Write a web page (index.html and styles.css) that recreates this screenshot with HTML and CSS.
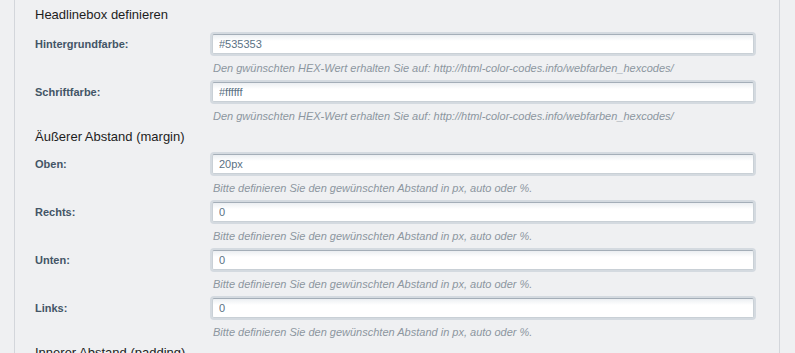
FILE: index.html
```html
<!DOCTYPE html>
<html lang="de">
<head>
  <meta charset="UTF-8" />
  <meta name="viewport" content="width=device-width, initial-scale=1.0"/>
  <title>Headlinebox</title>
  <link rel="stylesheet" href="styles.css">
</head>
<body>

<div class="panel">
  <h3 class="section-title first">Headlinebox definieren</h3>

  <div class="field">
    <label>Hintergrundfarbe:</label>
    <div class="control">
      <input type="text" value="#535353">
      <p class="help">Den gwünschten HEX-Wert erhalten Sie auf: http://html-color-codes.info/webfarben_hexcodes/</p>
    </div>
  </div>

  <div class="field">
    <label>Schriftfarbe:</label>
    <div class="control">
      <input type="text" value="#ffffff">
      <p class="help">Den gwünschten HEX-Wert erhalten Sie auf: http://html-color-codes.info/webfarben_hexcodes/</p>
    </div>
  </div>

  <h3 class="section-title">Äußerer Abstand (margin)</h3>

  <div class="field">
    <label>Oben:</label>
    <div class="control">
      <input type="text" value="20px">
      <p class="help">Bitte definieren Sie den gewünschten Abstand in px, auto oder %.</p>
    </div>
  </div>

  <div class="field">
    <label>Rechts:</label>
    <div class="control">
      <input type="text" value="0">
      <p class="help">Bitte definieren Sie den gewünschten Abstand in px, auto oder %.</p>
    </div>
  </div>

  <div class="field">
    <label>Unten:</label>
    <div class="control">
      <input type="text" value="0">
      <p class="help">Bitte definieren Sie den gewünschten Abstand in px, auto oder %.</p>
    </div>
  </div>

  <div class="field">
    <label>Links:</label>
    <div class="control">
      <input type="text" value="0">
      <p class="help">Bitte definieren Sie den gewünschten Abstand in px, auto oder %.</p>
    </div>
  </div>

  <h3 class="section-title">Innerer Abstand (padding)</h3>
</div>

</body>
</html>
```

FILE: styles.css
```css
body {
  margin: 0;
  background: #eff0f2;
  font-family: 'Liberation Sans', Arial, sans-serif;
  overflow: hidden;
}

.panel {
  margin: 0 15px 0 14px;
  padding: 0 23px 0 20px;
  border-left: 1px solid #d3d6db;
  border-right: 1px solid #d3d6db;
  min-height: 353px;
}

.section-title {
  margin: 0 0 6px;
  font-size: 13px;
  font-weight: normal;
  line-height: 18px;
  color: #1d1d1d;
}

.section-title.first {
  padding-top: 6px;
  margin-bottom: 8px;
}

.field {
  display: grid;
  grid-template-columns: 175px 1fr;
}

.field label {
  font-size: 11px;
  font-weight: bold;
  color: #435566;
  line-height: 24px;
}

.control input {
  display: block;
  box-sizing: border-box;
  width: calc(100% - 4px);
  height: 20px;
  margin: 2px;
  padding: 0 6px;
  border: 1px solid #c9d0d6;
  border-top-color: #a4aeb8;
  border-radius: 2px;
  box-shadow: 0 0 0 2px #d4dae0;
  background: linear-gradient(#eceff2, #fff 6px);
  font-family: inherit;
  font-size: 11px;
  color: #5a7183;
  outline: none;
}

.help {
  margin: 0;
  padding-left: 3px;
  font-size: 11px;
  font-style: italic;
  line-height: 24px;
  color: #8c969f;
}
```
